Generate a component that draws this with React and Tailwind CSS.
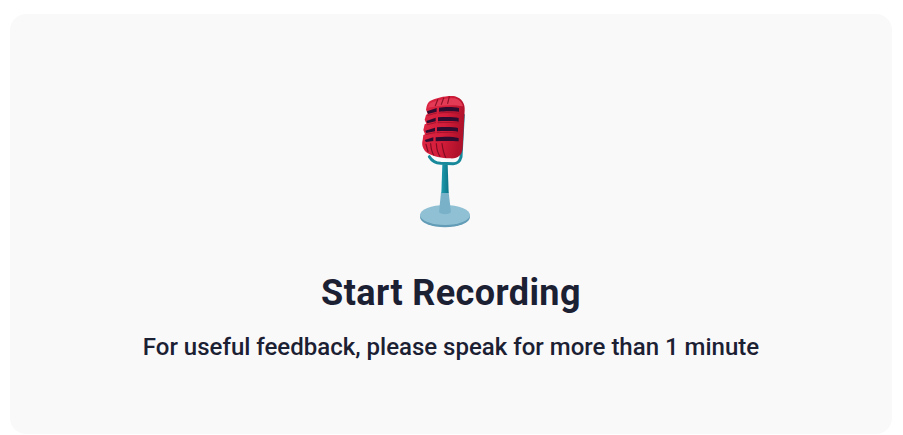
const MicIcon = () => (
  <svg width="102" height="150" viewBox="0 0 306 450" fill="none">
    <defs>
      <linearGradient id="head" x1="0" y1="0" x2="1" y2="0.25">
        <stop offset="0" stopColor="#dd2845" />
        <stop offset="0.6" stopColor="#d41d3a" />
        <stop offset="1" stopColor="#b0112b" />
      </linearGradient>
      <linearGradient id="stem" x1="0" y1="0" x2="1" y2="0">
        <stop offset="0" stopColor="#1f9bae" />
        <stop offset="1" stopColor="#0b7688" />
      </linearGradient>
    </defs>
    {/* base */}
    <ellipse cx="135" cy="396" rx="75" ry="31" fill="#639cb6" />
    <ellipse cx="135" cy="390" rx="75" ry="30" fill="#90c0d3" />
    <path d="M123 322 H146 L153 382 C146 390 124 390 117 382 Z" fill="#79b1c9" />
    {/* stem */}
    <path d="M127 238 H143 L146 324 H124 Z" fill="url(#stem)" />
    {/* cradle */}
    <path d="M88 215 C96 228 104 234 122 235 L160 236 C174 236 180 228 183 216 L190 90" stroke="#17899b" strokeWidth="9" strokeLinecap="round" />
    {/* head */}
    <path d="M90 48 C110 38 145 30 165 34 C185 40 196 56 194 76 L188 190 C186 212 172 222 150 220 C125 220 100 214 82 204 C68 194 64 178 68 165 L70 150 L75 148 L70 135 L74 118 L79 116 L74 104 L78 90 L83 86 L78 74 C80 60 84 52 90 48 Z" fill="url(#head)" />
    {/* top highlight */}
    <path d="M88 56 C110 44 145 38 165 40 C178 44 186 52 189 64 C160 58 120 60 84 68 Z" fill="#e33a56" />
    {/* top ribs */}
    <path d="M106 62 L113 44 M124 58 L131 39 M143 55 L148 35" stroke="#8f1027" strokeWidth="3.5" strokeLinecap="round" />
    {/* slots */}
    <path d="M81 79 L110 69 L110 80 L84 87 Z M117 68 C135 65 160 65 177 69 L177 80 C160 78 135 78 117 80 Z" fill="#2e0c30" />
    <path d="M79 108 L107 98 L107 109 L82 115 Z M114 97 C135 95 160 95 176 99 L176 110 C160 108 135 108 114 109 Z" fill="#2e0c30" />
    <path d="M76 137 L105 128 L105 139 L79 144 Z M111 127 C135 125 160 125 174 129 L174 140 C160 138 135 138 111 139 Z" fill="#2e0c30" />
    <path d="M74 165 L100 157 L100 168 L78 171 Z M107 157 C130 154 160 155 176 159 L176 169 C160 168 130 168 107 169 Z" fill="#2e0c30" />
    {/* lower shadow under bands */}
    <path d="M84 91 L110 84 M117 84 C135 82 160 82 177 85 M82 119 L107 113 M114 113 C135 112 160 112 176 114 M79 148 L105 143 M111 143 C135 142 160 142 174 144" stroke="#a8122c" strokeWidth="3" strokeLinecap="round" />
    {/* bottom ribs */}
    <path d="M78 178 L84 200 M92 176 C93 190 96 202 101 210 M109 176 C110 190 114 206 120 214 M126 176 C128 190 131 206 137 217" stroke="#7f0c22" strokeWidth="3.5" strokeLinecap="round" />
  </svg>
);

export default function App() {
  return (
    <div className="w-[903px] h-[435px] bg-white pt-[14px] pl-[10px] pr-[11px] pb-px font-['Roboto',sans-serif]">
      <div className="h-full rounded-2xl bg-[#f9f9fa] flex flex-col items-center pt-[71px] text-[#1c2033]">
        <MicIcon />
        <h1 className="mt-[38px] text-[36px] leading-[40px] font-bold tracking-[0.4px]">Start Recording</h1>
        <p className="mt-[20px] text-[24px] leading-[28px] font-medium">For useful feedback, please speak for more than 1 minute</p>
      </div>
    </div>
  );
}
